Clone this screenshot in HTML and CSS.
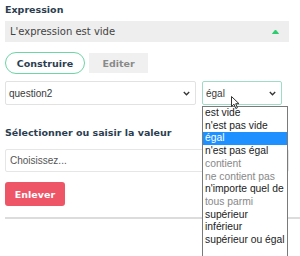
FILE: index.html
```html
<!DOCTYPE html>
<html>
<head>
    <title>Expression</title>
    <link rel="stylesheet" href="styles.css">
</head>
<body>
    <div class="panel">
        <div class="label">Expression</div>
        <div class="summary">
            <span>L'expression est vide</span>
            <svg class="caret" width="7" height="5" viewBox="0 0 7 5"><path d="M0.5 4.5 L3.5 1 L6.5 4.5 Z" fill="#2ecc71" stroke="#2ecc71" stroke-width="1"/></svg>
        </div>

        <div class="tabs">
            <div class="tab active">Construire</div>
            <div class="tab">Editer</div>
        </div>

        <div class="row">
            <div class="select wide">
                <span>question2</span>
                <svg width="7" height="5" viewBox="0 0 7 5"><path d="M0.8 1 L3.5 3.8 L6.2 1" fill="none" stroke="#333" stroke-width="1.3"/></svg>
            </div>
            <div class="select focus">
                <span>égal</span>
                <svg width="7" height="5" viewBox="0 0 7 5"><path d="M0.8 1 L3.5 3.8 L6.2 1" fill="none" stroke="#333" stroke-width="1.3"/></svg>
            </div>
        </div>

        <div class="label value-label">Sélectionner ou saisir la valeur</div>
        <div class="input">Choisissez...</div>

        <div class="remove">Enlever</div>
        <div class="rule"></div>
    </div>

    <ul class="options">
        <li>est vide</li>
        <li>n'est pas vide</li>
        <li class="selected">égal</li>
        <li>n'est pas égal</li>
        <li class="disabled">contient</li>
        <li class="disabled">ne contient pas</li>
        <li>n'importe quel de</li>
        <li class="disabled">tous parmi</li>
        <li>supérieur</li>
        <li>inférieur</li>
        <li>supérieur ou égal</li>
    </ul>

    <svg class="cursor" width="10" height="14" viewBox="0 0 10 14">
        <path d="M0.5 0.5 L0.5 10.5 L3 8.2 L4.8 12.5 L6.4 11.8 L4.7 7.7 L8 7.7 Z" fill="#fff" stroke="#333" stroke-width="1" stroke-linejoin="round"/>
    </svg>
</body>
</html>
```

FILE: styles.css
```css
body {
    margin: 0;
    background: #fff;
    font-family: "DejaVu Sans", Verdana, sans-serif;
    color: #2c3e50;
}

.panel {
    width: 284px;
    padding: 4px 11px 0 5px;
}

.label {
    font-size: 9.5px;
    font-weight: bold;
    line-height: 12px;
    color: #2c3e50;
}

.summary {
    margin-top: 5px;
    height: 21px;
    background: #eeeeee;
    display: flex;
    align-items: center;
    justify-content: space-between;
    padding: 0 10px 0 5px;
    font-size: 10px;
    color: #444;
}

.caret {
    margin-top: -1px;
}

.tabs {
    margin-top: 10px;
    display: flex;
    align-items: center;
    gap: 4px;
}

.tab {
    font-size: 9.5px;
    font-weight: bold;
    display: flex;
    align-items: center;
    justify-content: center;
    width: 59px;
    height: 20px;
    background: #f0f0f0;
    color: #8a8a8a;
}

.tab.active {
    width: 78px;
    height: 20px;
    background: #fff;
    color: #2c3e50;
    border: 1.5px solid #6dd5a6;
    border-radius: 12px;
}

.row {
    margin-top: 7px;
    display: flex;
    gap: 6px;
}

.select {
    height: 22px;
    border: 1px solid #e2e2e2;
    border-radius: 2px;
    display: flex;
    align-items: center;
    justify-content: space-between;
    padding: 0 5px 0 3px;
    font-family: "Liberation Sans", Arial, sans-serif;
    font-size: 10px;
    color: #3a3a3a;
}

.select.wide {
    width: 181px;
}

.select.focus {
    width: 70px;
    border-color: #9edcc7;
}

.value-label {
    margin-top: 22px;
}

.input {
    margin-top: 10px;
    height: 21px;
    border: 1px solid #e6e6e6;
    border-radius: 2px;
    display: flex;
    align-items: center;
    padding-left: 4px;
    font-family: "Liberation Sans", Arial, sans-serif;
    font-size: 10px;
    color: #555;
}

.remove {
    margin-top: 10px;
    width: 60px;
    height: 24px;
    background: #ee5566;
    border-radius: 3px;
    color: #fff;
    font-size: 9.5px;
    font-weight: bold;
    display: flex;
    align-items: center;
    justify-content: center;
}

.rule {
    margin-top: 11px;
    margin-right: -11px;
    height: 2px;
    background: #dcdcdc;
}

.options {
    position: absolute;
    left: 202px;
    top: 106px;
    width: 84px;
    height: 160px;
    margin: 0;
    padding: 0;
    list-style: none;
    background: #fff;
    border: 1px solid #7a7a7a;
    font-family: "Liberation Sans", Arial, sans-serif;
    font-size: 10.3px;
    line-height: 12.7px;
    color: #222;
}

.options li {
    padding-left: 2px;
    white-space: nowrap;
}

.options li.selected {
    background: #1e90ff;
    color: #fff;
}

.options li.disabled {
    color: #888;
}

.cursor {
    position: absolute;
    left: 231px;
    top: 96px;
}
```
